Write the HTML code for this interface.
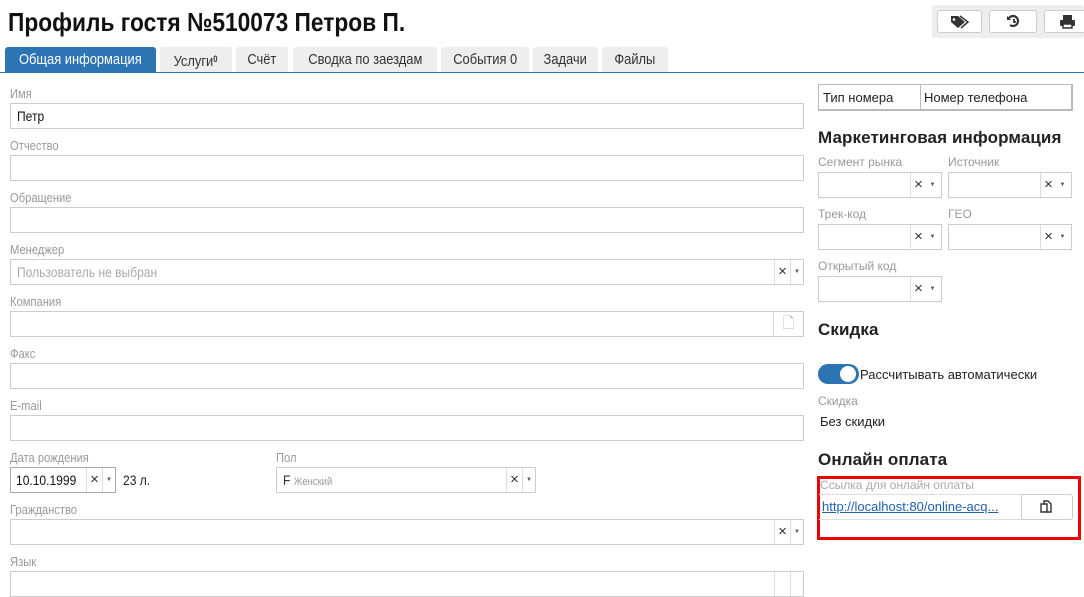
<!DOCTYPE html>
<html><head><meta charset="utf-8"><style>
*{box-sizing:border-box;margin:0;padding:0}
body{width:1084px;height:586px;overflow:hidden;background:#fff;font-family:"Liberation Sans",sans-serif;color:#222;position:relative}
.a{position:absolute}
.n{display:inline-block;transform:scaleX(0.86);transform-origin:left center;white-space:nowrap}
.lbl{position:absolute;font-size:13px;color:#999}
.in{position:absolute;height:26px;border:1px solid #ccc;background:#fff;font-size:14px;padding:4px 6px;white-space:nowrap}
.x{position:absolute;top:0;height:24px;width:16px;border-left:1px solid #ddd;text-align:center;font-size:15px;line-height:23px;color:#333}
.dd{position:absolute;top:0;height:24px;width:13px;border-left:1px solid #ddd;text-align:center;font-size:6px;line-height:24px;color:#555}
.tab{position:absolute;top:47px;height:25px;background:#eee;font-size:15px;line-height:25px;text-align:center;color:#333;border-radius:3px 3px 0 0;white-space:nowrap}
.tab .n{transform-origin:center center}
.h{position:absolute;font-size:17px;font-weight:bold;color:#222;letter-spacing:0.1px}
.btn{position:absolute;top:10px;height:23px;background:#fff;border:1px solid #ccc;border-radius:3px}
</style></head><body>
<div class="a" style="left:8px;top:7px;font-size:26px;color:#111;font-weight:bold"><span class="n" style="transform:scaleX(0.875)">Профиль гостя №510073 Петров П.</span></div>
<div class="a" style="left:932px;top:5px;width:152px;height:33px;background:#eee;border-radius:3px"></div>
<div class="btn" style="left:937px;width:45px"><svg width="45" height="21" viewBox="0 0 45 21"><path d="M13 5h7l7 6-7 6-7-6z" fill="#333"/><circle cx="16" cy="8.5" r="1.3" fill="#fff"/><path d="M22 5l8 6-7 6" stroke="#333" stroke-width="1.5" fill="none"/></svg></div>
<div class="btn" style="left:989px;width:48px"><svg width="48" height="21" viewBox="0 0 48 21"><path d="M19 7a5 5 0 1 1 1 7" stroke="#333" stroke-width="2.2" fill="none"/><path d="M17 5v4h4" fill="#333"/><path d="M24 8v3h2" stroke="#333" stroke-width="1.8" fill="none"/></svg></div>
<div class="btn" style="left:1044px;width:45px"><svg width="45" height="21" viewBox="0 0 45 21"><rect x="18" y="4" width="9" height="5" fill="#333"/><rect x="15" y="9" width="15" height="6" rx="1" fill="#333"/><rect x="18" y="13" width="9" height="4" fill="#fff" stroke="#333" stroke-width="1.5"/></svg></div>

<div class="tab" style="left:5px;width:151px;background:#2d74b5;color:#fff"><span class="n">Общая информация</span></div>
<div class="tab" style="left:160px;width:72px"><span class="n">Услуги<b style="font-size:9px;vertical-align:4px">0</b></span></div>
<div class="tab" style="left:236px;width:52px"><span class="n">Счёт</span></div>
<div class="tab" style="left:293px;width:144px"><span class="n">Сводка по заездам</span></div>
<div class="tab" style="left:441px;width:88px"><span class="n">События 0</span></div>
<div class="tab" style="left:533px;width:65px"><span class="n">Задачи</span></div>
<div class="tab" style="left:602px;width:66px"><span class="n">Файлы</span></div>
<div class="a" style="left:0;top:72px;width:1084px;height:1px;background:#2d74b5"></div>

<div class="lbl" style="left:10px;top:86px"><span class="n">Имя</span></div>
<div class="in" style="left:10px;top:103px;width:794px;color:#111"><span class="n">Петр</span></div>
<div class="lbl" style="left:10px;top:138px"><span class="n">Отчество</span></div>
<div class="in" style="left:10px;top:155px;width:794px"></div>
<div class="lbl" style="left:10px;top:190px"><span class="n">Обращение</span></div>
<div class="in" style="left:10px;top:207px;width:794px"></div>
<div class="lbl" style="left:10px;top:242px"><span class="n">Менеджер</span></div>
<div class="in" style="left:10px;top:259px;width:794px;color:#aaa"><span class="n">Пользователь не выбран</span><span class="x" style="left:763px">×</span><span class="dd" style="left:779px">▼</span></div>
<div class="lbl" style="left:10px;top:294px"><span class="n">Компания</span></div>
<div class="in" style="left:10px;top:311px;width:794px"><span class="x" style="left:762px;width:30px;color:#bbb">🗋</span></div>
<div class="lbl" style="left:10px;top:346px"><span class="n">Факс</span></div>
<div class="in" style="left:10px;top:363px;width:794px"></div>
<div class="lbl" style="left:10px;top:398px"><span class="n">E-mail</span></div>
<div class="in" style="left:10px;top:415px;width:794px"></div>
<div class="lbl" style="left:10px;top:450px"><span class="n">Дата рождения</span></div>
<div class="in" style="left:10px;top:467px;width:106px;color:#111;border-color:#aaa;padding-left:5px"><span class="n">10.10.1999</span><span class="x" style="left:75px">×</span><span class="dd" style="left:91px">▼</span></div>
<div class="a" style="left:123px;top:472px;font-size:14px"><span class="n">23 л.</span></div>
<div class="lbl" style="left:276px;top:450px"><span class="n">Пол</span></div>
<div class="in" style="left:276px;top:467px;width:260px;color:#333"><span class="n">F <span style="font-size:11px;color:#999">Женский</span></span><span class="x" style="left:229px">×</span><span class="dd" style="left:245px">▼</span></div>
<div class="lbl" style="left:10px;top:502px"><span class="n">Гражданство</span></div>
<div class="in" style="left:10px;top:519px;width:794px"><span class="x" style="left:763px">×</span><span class="dd" style="left:779px">▼</span></div>
<div class="lbl" style="left:10px;top:554px"><span class="n">Язык</span></div>
<div class="in" style="left:10px;top:571px;width:794px"><span class="x" style="left:763px"></span><span class="dd" style="left:779px"></span></div>

<div class="a" style="left:818px;top:84px;width:255px;height:27px;border:1px solid #bbb;border-width:1px 2px 2px 1px;font-size:13px;background:#fff">
<span class="a" style="left:4px;top:5px">Тип номера</span><span class="a" style="left:101px;top:0;height:25px;border-left:1px solid #bbb"></span><span class="a" style="left:105px;top:5px">Номер телефона</span></div>
<div class="h" style="left:818px;top:128px">Маркетинговая информация</div>
<div class="lbl" style="left:818px;top:155px;font-size:12px">Сегмент рынка</div>
<div class="lbl" style="left:948px;top:155px;font-size:12px">Источник</div>
<div class="in" style="left:818px;top:172px;width:124px"><span class="x" style="left:91px">×</span><span class="dd" style="left:107px;border:0">▼</span></div>
<div class="in" style="left:948px;top:172px;width:124px"><span class="x" style="left:91px">×</span><span class="dd" style="left:107px;border:0">▼</span></div>
<div class="lbl" style="left:818px;top:207px;font-size:12px">Трек-код</div>
<div class="lbl" style="left:948px;top:207px;font-size:12px">ГЕО</div>
<div class="in" style="left:818px;top:224px;width:124px"><span class="x" style="left:91px">×</span><span class="dd" style="left:107px;border:0">▼</span></div>
<div class="in" style="left:948px;top:224px;width:124px"><span class="x" style="left:91px">×</span><span class="dd" style="left:107px;border:0">▼</span></div>
<div class="lbl" style="left:818px;top:259px;font-size:12px">Открытый код</div>
<div class="in" style="left:818px;top:276px;width:124px"><span class="x" style="left:91px">×</span><span class="dd" style="left:107px;border:0">▼</span></div>
<div class="h" style="left:818px;top:320px">Скидка</div>
<div class="a" style="left:818px;top:364px;width:41px;height:20px;border-radius:10px;background:#2d74b5"></div>
<div class="a" style="left:840px;top:366px;width:16px;height:16px;border-radius:8px;background:#fff"></div>
<div class="a" style="left:860px;top:367px;font-size:13px">Рассчитывать автоматически</div>
<div class="lbl" style="left:818px;top:394px;font-size:12px">Скидка</div>
<div class="a" style="left:820px;top:414px;font-size:13px">Без скидки</div>
<div class="h" style="left:818px;top:450px">Онлайн оплата</div>
<div class="a" style="left:817px;top:476px;width:264px;height:64px;border:3px solid #e00"></div>
<div class="lbl" style="left:820px;top:478px;font-size:12px;color:#aaa">Ссылка для онлайн оплаты</div>
<div class="a" style="left:819px;top:494px;width:205px;height:26px;border:1px solid #ddd;border-left:0;border-right:0"></div>
<div class="a" style="left:822px;top:499px;font-size:13px;color:#2060b0;text-decoration:underline">http://localhost:80/online-acq...</div>
<div class="a" style="left:1021px;top:494px;width:52px;height:26px;border:1px solid #ccc;border-radius:3px;background:#fff"><svg width="50" height="24" viewBox="0 0 50 24"><path d="M19 9h6v8h-6z" stroke="#333" stroke-width="1.4" fill="none"/><path d="M22 9V6h4l3 3v8h-4" stroke="#333" stroke-width="1.4" fill="none"/></svg></div>
</body></html>
